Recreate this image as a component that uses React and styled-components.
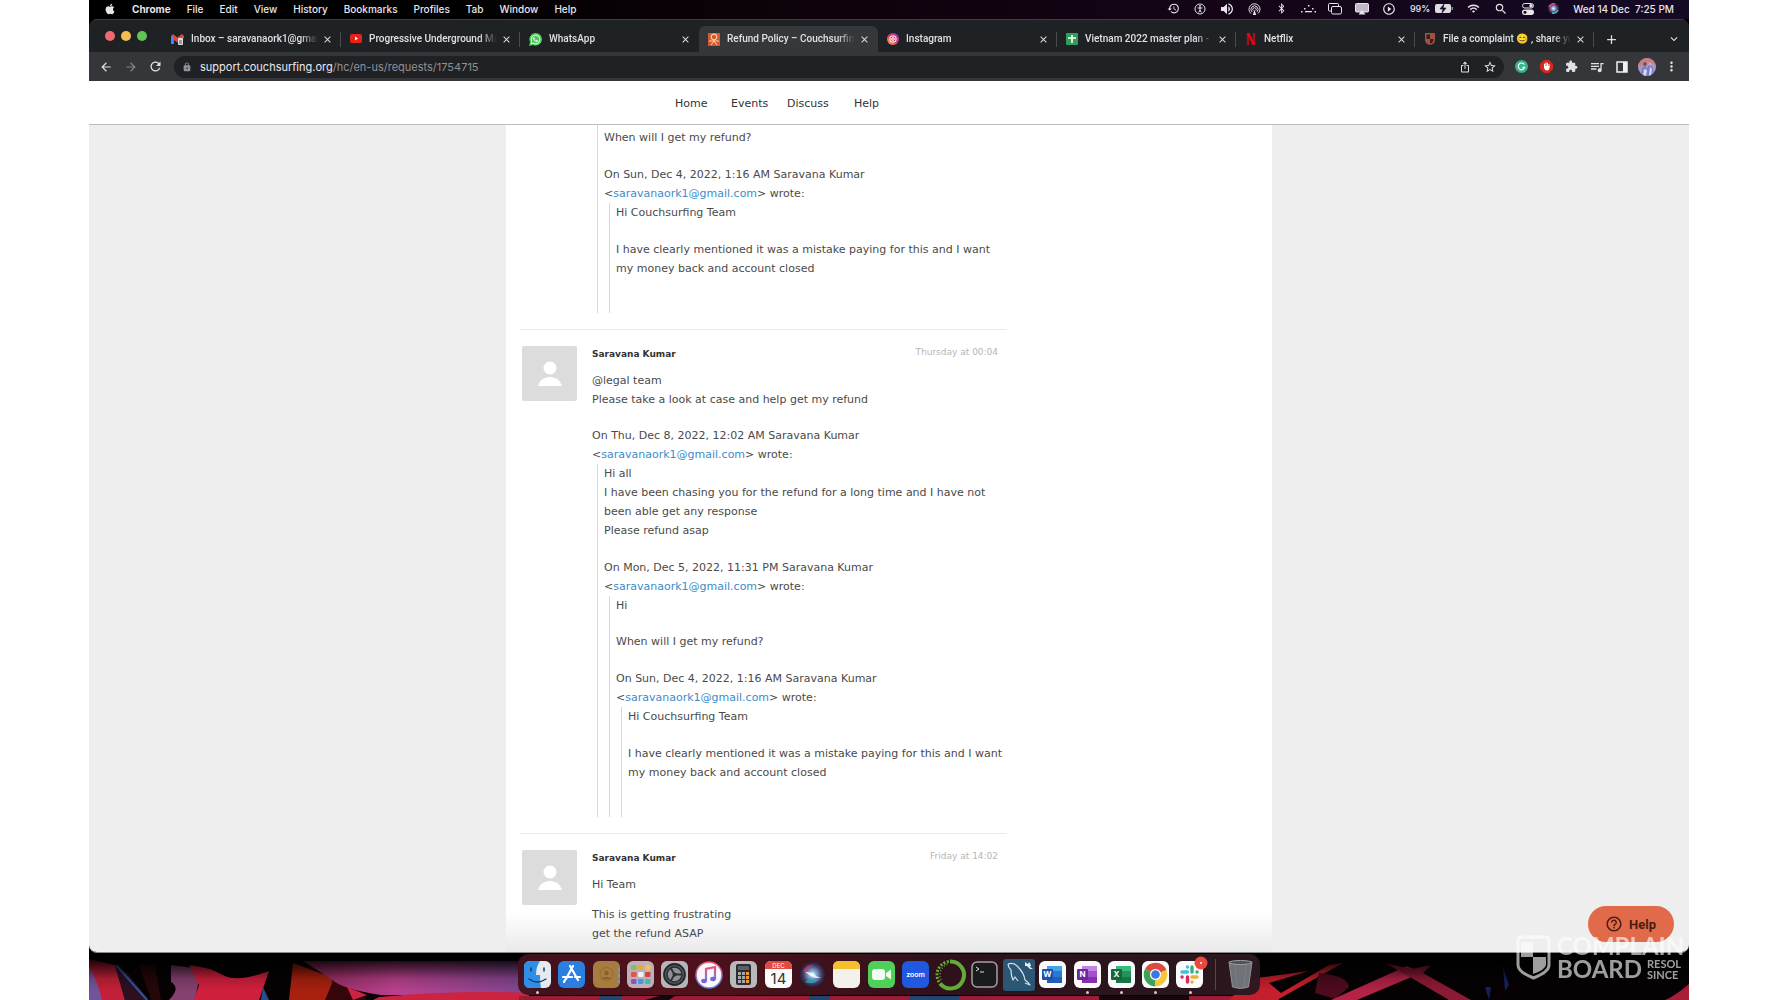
import styled, { createGlobalStyle } from "styled-components";
import { FaApple, FaWhatsapp, FaBluetoothB } from "react-icons/fa";
import {
  MdAdd,
  MdArrowBack,
  MdArrowForward,
  MdClose,
  MdExpandMore,
  MdExtension,
  MdHelpOutline,
  MdHistory,
  MdIosShare,
  MdLock,
  MdMoreVert,
  MdPlayCircleOutline,
  MdQueueMusic,
  MdRefresh,
  MdSearch,
  MdStarBorder,
  MdVolumeUp,
  MdWifi,
} from "react-icons/md";

const GlobalStyle = createGlobalStyle`
  * {
    box-sizing: border-box;
    margin: 0;
    padding: 0;
  }

  body {
    background: #fff;
    font-family: Inter, "Liberation Sans", sans-serif;
  }

  button {
    border: none;
    background: none;
    color: inherit;
    font: inherit;
    display: flex;
    align-items: center;
    justify-content: center;
  }

  a {
    color: inherit;
    text-decoration: none;
  }

  svg {
    display: block;
    flex-shrink: 0;
  }
`;

const Screen = styled.div`
  height: 100vh;
  margin: 0 89px;
  display: flex;
  flex-direction: column;
  background: #000;
  position: relative;
  overflow: hidden;
`;

/* ---------- menu bar ---------- */

const MenuBar = styled.header`
  height: 19px;
  flex-shrink: 0;
  display: flex;
  align-items: center;
  justify-content: space-between;
  padding: 0 15px 2px;
  background: linear-gradient(90deg, #000 20%, #0c0209 40%, #130516 70%, #150a26);
  color: #e8e6ea;
  font-size: 10px;
  font-weight: 500;
`;

const Menus = styled.nav`
  display: flex;
  align-items: center;
  gap: 16px;
`;

const MenuButton = styled.button`
  font-weight: ${(props) => (props.$bold ? 700 : 500)};
`;

const StatusItems = styled.div`
  display: flex;
  align-items: center;
  gap: 14px;
`;

const StatusIcon = styled.span`
  width: ${(props) => props.$width || 13}px;
  display: flex;
  justify-content: center;
`;

const BatteryStatus = styled.span`
  display: flex;
  align-items: center;
  gap: 5px;
  font-size: 9px;
`;

/* ---------- browser ---------- */

const Browser = styled.main`
  flex: 1;
  min-height: 0;
  display: flex;
  flex-direction: column;
  border-radius: 8px;
  overflow: hidden;
  border-bottom: 1px solid #8b8b8b;
`;

const TabStrip = styled.div`
  height: 33px;
  flex-shrink: 0;
  display: flex;
  align-items: flex-end;
  background: #1f2225;
  border-top: 1px solid #3d4042;
  color: #dfe1e4;
`;

const TrafficLights = styled.div`
  width: 73px;
  height: 32px;
  flex-shrink: 0;
  display: flex;
  align-items: center;
  gap: 6px;
  padding: 0 0 0 16px;
`;

const Light = styled.button`
  width: 10px;
  height: 10px;
  border-radius: 50%;
  background: ${(props) => props.$color};
`;

const Tab = styled.div`
  flex: 0 1 179px;
  min-width: 0;
  height: 26px;
  display: flex;
  align-items: center;
  padding: 0 0 0 9px;
  border-radius: 6px 6px 0 0;
  background: ${(props) => (props.$active ? "#35383a" : "transparent")};
`;

const TabTitle = styled.span`
  flex: 1;
  min-width: 0;
  margin: 0 4px 0 7px;
  overflow: hidden;
  white-space: nowrap;
  font-family: Roboto, sans-serif;
  font-size: 10px;
  line-height: 14px;
  font-weight: 500;
  mask-image: linear-gradient(90deg, #000 86%, transparent);
`;

const TabDivider = styled.span`
  width: 1px;
  height: 15px;
  margin-left: 7px;
  background: ${(props) => (props.$hidden ? "transparent" : "#4a4d50")};
`;

const StripButton = styled.button`
  width: 30px;
  height: 26px;
  margin-left: ${(props) => (props.$end ? "auto" : "2px")};
`;

const Toolbar = styled.div`
  height: 29px;
  flex-shrink: 0;
  display: flex;
  align-items: center;
  padding: 0 5px 0 4px;
  background: #35363a;
  color: #dfe1e4;
`;

const ToolButton = styled.button`
  width: 25px;
  height: 22px;
  flex-shrink: 0;
  opacity: ${(props) => (props.$dim ? 0.45 : 1)};
`;

const AddressBar = styled.div`
  flex: 1;
  height: 22px;
  margin: 0 5px 0 6px;
  padding: 0 2px 0 8px;
  display: flex;
  align-items: center;
  border-radius: 11px;
  background: #202124;
  font-size: 11px;
`;

const Url = styled.a`
  flex: 1;
  margin-left: 8px;
  color: #8f9296;
`;

const Domain = styled.span`
  color: #e8eaed;
`;

/* ---------- web page ---------- */

const SiteHeader = styled.header`
  height: 44px;
  flex-shrink: 0;
  display: flex;
  justify-content: center;
  background: #fff;
  border-bottom: 1px solid #bdbdbd;
`;

const SiteNav = styled.nav`
  width: 766px;
  padding-top: 1px;
  padding-left: 169px;
  display: grid;
  grid-template-columns: 56px 56px 67px auto;
  align-items: center;
  color: #333;
  font-family: "DejaVu Sans", Verdana, sans-serif;
  font-size: 11px;
`;

const PageBody = styled.div`
  flex: 1;
  min-height: 0;
  display: flex;
  justify-content: center;
  overflow: hidden;
  background: #eee;
`;

const Column = styled.section`
  width: 766px;
  padding: 0 14px;
  background: linear-gradient(#fff calc(100% - 40px), #e9e9e9);
  color: #4a4a4a;
  font-family: "DejaVu Sans", Verdana, sans-serif;
  font-size: 11px;
  line-height: 19px;
`;

const Comments = styled.div`
  width: 66%;
`;

const Comment = styled.article`
  display: flex;
  gap: 15px;
  padding: ${(props) => (props.$first ? "0" : "16px")} 0 16px 2px;
  border-bottom: 1px solid #ebebeb;
`;

const Avatar = styled.div`
  width: 55px;
  height: 55px;
  flex-shrink: 0;
  display: flex;
  align-items: center;
  justify-content: center;
  border-radius: 2px;
  background: ${(props) => (props.$empty ? "transparent" : "#dcdcdc")};
`;

const CommentBody = styled.div`
  flex: 1;
  min-width: 0;
`;

const CommentHead = styled.div`
  display: flex;
  justify-content: space-between;
  align-items: flex-start;
  padding-right: 9px;
  margin-bottom: 8px;
`;

const Author = styled.strong`
  color: #333;
  font-size: 9px;
  line-height: 17px;
`;

const Time = styled.time`
  color: #b5b5b5;
  font-size: 9px;
  line-height: 12px;
`;

const Para = styled.p`
  white-space: nowrap;
  margin-bottom: ${(props) => props.$gap || 0}px;
`;

const Quote = styled.blockquote`
  margin-left: 5px;
  padding-left: 6px;
  padding-top: ${(props) => (props.$cut ? 3 : 0)}px;
  border-left: 1px solid #d9d9d9;
`;

const QuoteEnd = styled.div`
  height: 35px;
`;

const MailLink = styled.a`
  color: #3b8ccb;
`;

const HelpButton = styled.button`
  position: absolute;
  right: 15px;
  bottom: 58px;
  height: 36px;
  padding: 0 18px 0 17px;
  gap: 6px;
  border-radius: 18px;
  background: #e06a4a;
  color: #4a1d12;
  font-family: Roboto, sans-serif;
  font-size: 13px;
  font-weight: 700;
`;

/* ---------- desktop + dock ---------- */

const Desktop = styled.footer`
  position: relative;
  height: 47px;
  flex-shrink: 0;
  display: flex;
  justify-content: center;
  align-items: flex-start;
  padding-top: 1px;
`;

const WallpaperSvg = styled.svg`
  position: absolute;
  inset: 0;
  width: 100%;
  height: 100%;
`;

const DockBar = styled.nav`
  position: relative;
  width: 742px;
  height: 41px;
  padding: 0 6px;
  display: flex;
  align-items: center;
  border-radius: 10px;
  background: linear-gradient(90deg, rgba(64, 18, 30, 0.96), rgba(84, 18, 28, 0.96) 20%, rgba(46, 18, 28, 0.97) 60%, rgba(44, 24, 32, 0.97));
`;

const DockApps = styled.div`
  flex: 1;
  display: flex;
  justify-content: space-between;
`;

const DockApp = styled.button`
  position: relative;
  width: 27px;
  height: 36px;

  &::after {
    content: "";
    position: absolute;
    bottom: -1px;
    width: 3px;
    height: 3px;
    border-radius: 50%;
    background: ${(props) => (props.$running ? "#d8c4cb" : "transparent")};
  }
`;

const DockDivider = styled.span`
  width: 1px;
  height: 31px;
  margin: 0 11px;
  background: #5c444e;
`;

const Watermark = styled.div`
  position: absolute;
  left: calc(100% - 173px);
  bottom: 20px;
  width: 190px;
  display: flex;
  align-items: flex-end;
  gap: 6px;
  color: #fff;
  opacity: 0.62;
  pointer-events: none;
  font-family: Lato, sans-serif;
`;

const MarkWords = styled.div`
  font-size: 24px;
  line-height: 23px;
  font-weight: 700;
  white-space: nowrap;
`;

const MarkRow = styled.div`
  display: flex;
  align-items: center;
  gap: 5px;
`;

const MarkSmall = styled.span`
  font-size: 11px;
  line-height: 11px;
`;

/* ---------- tab icons ---------- */

const GmailIcon = () => (
  <svg width="13" height="12" viewBox="0 0 13 12">
    <path d="M1 11V3l2 1v7z" fill="#4285f4" />
    <path d="M12 11V3l-2 1v7z" fill="#34a853" />
    <path d="M0 3l2-2 4.500 3.500L11 1l2 2v2L6.500 9.500 0 5z" fill="#ea4335" />
    <path d="M0 3l3 1v7H0z" fill="#4285f4" />
    <rect x="7" y="5" width="5" height="7" rx="1" fill="#ddd" />
    <path d="M8 8h3M8 10h3" stroke="#555" />
  </svg>
);

const YoutubeIcon = () => (
  <svg width="12" height="12" viewBox="0 0 12 12">
    <rect y="1" width="12" height="9" rx="2" fill="#e62117" />
    <path d="M5 3.500v4l3-2z" fill="#fff" />
  </svg>
);

const WhatsappIcon = () => (
  <svg width="13" height="13" viewBox="0 0 13 13">
    <path d="M0 13l1-4a6.300 6.300 0 1 1 3 3z" fill="#4ac959" />
    <FaWhatsapp x="1" y="1" size={11} color="#fff" />
  </svg>
);

const CouchIcon = () => (
  <svg width="12" height="13" viewBox="0 0 12 13">
    <rect width="12" height="13" fill="#d9572b" />
    <circle cx="6" cy="4" r="2.800" fill="none" stroke="#f8cfae" strokeWidth="1.200" />
    <path d="M6 6v2M1 8h10M3 12l3-4 3 4" fill="none" stroke="#f8cfae" />
  </svg>
);

const InstagramIcon = () => (
  <svg width="12" height="12" viewBox="0 0 12 12">
    <defs>
      <linearGradient id="insta" x1="0" y1="1" x2="1" y2="0">
        <stop offset="0" stopColor="#fdb53f" />
        <stop offset="0.500" stopColor="#e5376b" />
        <stop offset="1" stopColor="#8a3ac8" />
      </linearGradient>
    </defs>
    <circle cx="6" cy="6" r="6" fill="url(#insta)" />
    <rect x="3" y="3" width="6" height="6" rx="2" fill="none" stroke="#fff" />
    <circle cx="6" cy="6" r="1.300" fill="none" stroke="#fff" />
  </svg>
);

const SheetIcon = () => (
  <svg width="12" height="12" viewBox="0 0 12 12">
    <rect width="12" height="12" rx="1" fill="#2f9d58" />
    <path d="M2 5h8M6 2v8" stroke="#fff" strokeWidth="1.600" />
  </svg>
);

const NetflixIcon = () => (
  <svg width="12" height="12" viewBox="0 0 12 12">
    <path d="M3 0v12M9 0v12" stroke="#a80f16" strokeWidth="2.400" />
    <path d="M1.800 0h2.600l5.800 12H7.600z" fill="#e50914" />
  </svg>
);

const ShieldIcon = () => (
  <svg width="12" height="12" viewBox="0 0 12 12">
    <path d="M1 0h10v7q0 4-5 5-5-1-5-5z" fill="#a8503f" />
    <path d="M2.500 1.500H6V6H2.500zM6 6h3.500q0 4-3.500 4.500z" fill="#33201e" />
  </svg>
);

/* ---------- status icons ---------- */

const AccessIcon = () => (
  <svg width="12" height="12" viewBox="0 0 12 12" fill="none" stroke="currentColor">
    <circle cx="6" cy="6" r="5" />
    <path d="M3.500 5h5M6 4v3M6 7l-1.300 2.500M6 7l1.300 2.500" />
    <circle cx="6" cy="3" r="0.500" fill="currentColor" />
  </svg>
);

const AirdropIcon = () => (
  <svg width="13" height="12" viewBox="0 0 13 12" fill="none" stroke="currentColor">
    <path d="M3 10.500a5.500 5.500 0 1 1 7 0M4 8.800a3.500 3.500 0 1 1 5 0M5.200 7.500a1.700 1.700 0 1 1 2.600 0" />
    <path d="M6.500 6.500L4.800 12h3.400z" fill="currentColor" stroke="none" />
  </svg>
);

const DotsIcon = () => (
  <svg width="15" height="8" viewBox="0 0 15 8" fill="currentColor">
    <path d="M0 6h1.500v1.500H0zM3 3h1.500v1.500H3zM7 0h1.500v1.500H7zM11 3h1.500v1.500H11zM13.500 6H15v1.500h-1.500zM4 6h7v1.300H4z" />
  </svg>
);

const WindowsIcon = () => (
  <svg width="14" height="12" viewBox="0 0 14 12" fill="none" stroke="currentColor">
    <path d="M3 8H1.500q-1 0-1-1V1.500q0-1 1-1h8q1 0 1 1V3" />
    <rect x="3.500" y="3.500" width="10" height="7.500" rx="1.500" />
  </svg>
);

const DisplayIcon = () => (
  <svg width="14" height="12" viewBox="0 0 14 12">
    <rect x="0.500" y="0.500" width="13" height="8.500" rx="1" fill="#bdb8c4" stroke="currentColor" />
    <path d="M7 7l3.500 4.500h-7z" fill="currentColor" />
  </svg>
);

const BatteryIcon = () => (
  <svg width="18" height="9" viewBox="0 0 18 9">
    <rect width="16" height="9" rx="2" fill="#dedbe2" />
    <rect x="16.500" y="3" width="1.500" height="3" fill="#8d8894" />
    <path d="M9 0L5 5h3L7 9l4-5H8z" fill="#150a26" stroke="#150a26" strokeWidth="0.600" />
  </svg>
);

const ControlIcon = () => (
  <svg width="12" height="12" viewBox="0 0 12 12">
    <rect x="0.500" y="0.500" width="11" height="4.500" rx="2.200" fill="none" stroke="currentColor" />
    <circle cx="9" cy="2.700" r="1.700" fill="currentColor" />
    <rect y="6.500" width="12" height="5.500" rx="2.700" fill="currentColor" />
    <circle cx="3" cy="9.200" r="1.500" fill="#150a26" />
  </svg>
);

const SiriDefs = () => (
  <defs>
    <radialGradient id="siri">
      <stop offset="0" stopColor="#fff" />
      <stop offset="0.300" stopColor="#7fb7e8" />
      <stop offset="0.650" stopColor="#7b3b78" />
      <stop offset="1" stopColor="#1c2334" />
    </radialGradient>
  </defs>
);

const SiriSmall = () => (
  <svg width="11" height="11" viewBox="0 0 11 11">
    <SiriDefs />
    <circle cx="5.500" cy="5.500" r="5.500" fill="url(#siri)" />
    <path d="M1 4a5 5 0 0 1 6-3" stroke="#e05478" strokeWidth="1.500" fill="none" />
    <path d="M4 10a5 5 0 0 0 6-3" stroke="#3bc6b4" strokeWidth="1.500" fill="none" />
  </svg>
);

/* ---------- toolbar icons ---------- */

const GrammarlyIcon = () => (
  <svg width="13" height="13" viewBox="0 0 13 13">
    <circle cx="6.500" cy="6.500" r="6.500" fill="#35b58a" />
    <path d="M9.300 4.500A3.300 3.300 0 1 0 9.700 7.300H7.300" fill="none" stroke="#fff" strokeWidth="1.200" />
  </svg>
);

const BlockIcon = () => (
  <svg width="13" height="13" viewBox="0 0 13 13">
    <path d="M4 0h5l4 4v5l-4 4H4L0 9V4z" fill="#d6291e" />
    <path d="M4.500 7V4M6 6V2.800M7.500 6V3.300M9 7V4.500" stroke="#fff" strokeWidth="1.100" strokeLinecap="round" />
    <path d="M4 6h5.500v2q-.5 2.500-2.500 2.500T4 8z" fill="#fff" />
  </svg>
);

const PanelIcon = () => (
  <svg width="12" height="12" viewBox="0 0 12 12">
    <rect x="1" y="1" width="10" height="10" fill="none" stroke="#f1f1f1" strokeWidth="1.500" />
    <path d="M7 1h4v10H7z" fill="#f1f1f1" />
  </svg>
);

const ProfilePic = () => (
  <svg width="18" height="18" viewBox="0 0 18 18">
    <defs>
      <clipPath id="pic">
        <circle cx="9" cy="9" r="9" />
      </clipPath>
    </defs>
    <g clipPath="url(#pic)">
      <path d="M0 0h18v18H0z" fill="#a996c4" />
      <path d="M0 0h18v5l-5 2-4-3-5 4-4-1z" fill="#c97f80" />
      <path d="M3 18l1-8 3-3 2 4 2-5 4 4 1 8z" fill="#6d83cf" />
      <path d="M6 11l3 1-1 6H5zM12 9l2 2-1 7h-2z" fill="#e6d5ea" />
      <circle cx="7" cy="6" r="1.800" fill="#7e3f4a" />
      <circle cx="12" cy="6" r="1.800" fill="#d8a4a0" />
    </g>
  </svg>
);

const PersonIcon = () => (
  <svg width="26" height="28" viewBox="0 0 26 28" fill="#fff">
    <circle cx="13" cy="8" r="6.500" />
    <path d="M1 26q2-8.500 12-9 10 .5 12 9z" />
  </svg>
);

/* ---------- dock icons ---------- */

const Tile = ({ fill, children }) => (
  <svg width="27" height="27" viewBox="0 0 27 27">
    <rect width="27" height="27" rx="6" fill={fill} />
    {children}
  </svg>
);

const Finder = () => (
  <Tile fill="#e6eaf0">
    <path d="M6 0h10q-4 6-4 14h4q0 8 1 13H6q-6 0-6-6V6q0-6 6-6z" fill="#2f8fe6" />
    <path d="M7 7v3M20 7v3" stroke="#123a66" strokeWidth="1.500" strokeLinecap="round" />
    <path d="M5 18q8 6 17 0" stroke="#123a66" strokeWidth="1.300" fill="none" strokeLinecap="round" />
  </Tile>
);

const AppStore = () => (
  <Tile fill="#2b7fe0">
    <path d="M15 5L8 18M12 5l8 14M5 16h9M17 16h5M7 19l-1 2" stroke="#fff" strokeWidth="2.200" strokeLinecap="round" />
  </Tile>
);

const Contacts = () => (
  <Tile fill="#a87c3f">
    <path d="M26 7v4M26 13v4M26 19v3" stroke="#7c97a8" strokeWidth="2" />
    <circle cx="13.500" cy="13" r="6.500" fill="none" stroke="#936b34" />
    <circle cx="13.500" cy="12" r="2.200" fill="#86602d" />
    <path d="M8 18q5.500-4 11 0" fill="#86602d" />
  </Tile>
);

const padColors = ["#7ec05a", "#f0a53a", "#f0c44a", "#e2544c", "#eef0f4", "#d9403c", "#8a55c8", "#3c9fdf", "#4cb6ae"];

const Launchpad = () => (
  <Tile fill="#bdb0b8">
    {padColors.map((color, i) => (
      <rect key={color} x={4 + (i % 3) * 7} y={4 + Math.floor(i / 3) * 7} width="5.500" height="5" rx="1.200" fill={color} />
    ))}
  </Tile>
);

const Settings = () => (
  <Tile fill="#b4b6b9">
    <circle cx="13.500" cy="13.500" r="10.500" fill="#55585c" stroke="#26282b" strokeWidth="1.800" />
    <circle cx="13.500" cy="13.500" r="7.500" fill="#8e9297" stroke="#2b2d30" strokeWidth="1.500" />
    <path d="M13.500 13.500L10 7.500M13.500 13.500h7M13.500 13.500L10 19.500" stroke="#2b2d30" strokeWidth="1.800" />
    <circle cx="13.500" cy="13.500" r="2" fill="#2b2d30" />
  </Tile>
);

const Music = () => (
  <svg width="28" height="28" viewBox="0 0 28 28">
    <defs>
      <linearGradient id="music" x1="0" y1="0" x2="0" y2="1">
        <stop offset="0" stopColor="#f0506a" />
        <stop offset="1" stopColor="#4d8df0" />
      </linearGradient>
    </defs>
    <circle cx="14" cy="14" r="13" fill="#fbf6fb" stroke="url(#music)" strokeWidth="1.500" />
    <path d="M11 20V8l9-2v12" fill="none" stroke="url(#music)" strokeWidth="2.200" />
    <ellipse cx="9" cy="20" rx="2.800" ry="2.200" fill="#7b62d8" />
    <ellipse cx="18" cy="18" rx="2.800" ry="2.200" fill="#7b62d8" />
  </svg>
);

const Calculator = () => (
  <Tile fill="#b9b9bc">
    <rect x="6" y="3" width="15" height="21" rx="2" fill="#2b2d30" />
    <rect x="8" y="5" width="11" height="4" fill="#5c6064" />
    {[11, 15, 19].map((y) => (
      <g key={y}>
        <rect x="8" y={y} width="3" height="3" fill="#a5a7aa" />
        <rect x="12" y={y} width="3" height="3" fill="#a5a7aa" />
        <rect x="16" y={y} width="3" height="3" fill="#f29b2c" />
      </g>
    ))}
  </Tile>
);

const Calendar = () => (
  <Tile fill="#fafafa">
    <path d="M0 8V6q0-6 6-6h15q6 0 6 6v2z" fill="#df4a41" />
    <text x="13.500" y="7" textAnchor="middle" fontFamily="Inter" fontSize="6" fill="#fff">DEC</text>
    <text x="13.500" y="23" textAnchor="middle" fontFamily="Inter" fontSize="15" fill="#333">14</text>
  </Tile>
);

const Siri = () => (
  <svg width="27" height="27" viewBox="0 0 27 27">
    <defs>
      <radialGradient id="orb">
        <stop offset="0" stopColor="#f4fbff" />
        <stop offset="0.250" stopColor="#86b9e0" />
        <stop offset="0.700" stopColor="#4a3a66" />
        <stop offset="1" stopColor="#231a2c" />
      </radialGradient>
    </defs>
    <circle cx="13.500" cy="13.500" r="13" fill="url(#orb)" />
    <path d="M4 10q4-7 11-6-6 2-8 8z" fill="#c23f74" opacity="0.800" />
    <path d="M6 21q8 4 16-4-7 3-11 0z" fill="#2ba3b4" opacity="0.800" />
    <path d="M6 11q7 0 10 3t7 2q-5 2-9 0t-8-5z" fill="#fff" opacity="0.800" />
  </svg>
);

const Notes = () => (
  <Tile fill="#f4f1ea">
    <path d="M0 8V6q0-6 6-6h15q6 0 6 6v2z" fill="#f6bf2f" />
  </Tile>
);

const Facetime = () => (
  <Tile fill="#4fd058">
    <rect x="4" y="8" width="13" height="11" rx="3" fill="#f2fbf2" />
    <path d="M18 12l5-3.500v10L18 15z" fill="#f2fbf2" />
  </Tile>
);

const Zoom = () => (
  <Tile fill="#2059e0">
    <text x="13.500" y="16" textAnchor="middle" fontFamily="Inter" fontWeight="600" fontSize="7" fill="#fff">zoom</text>
  </Tile>
);

const Anaconda = () => (
  <svg width="32" height="32" viewBox="0 0 32 32" fill="none" stroke="#63ab38">
    <path d="M16 2.500a13.500 13.500 0 1 1-10 22" strokeWidth="4" />
    <path d="M5 23A13.500 13.500 0 0 1 16 2.500" strokeWidth="3" strokeDasharray="2 1.500" />
    <path d="M7 21A11.500 11.500 0 0 1 14 5" strokeWidth="1.500" strokeDasharray="1 2" />
  </svg>
);

const Terminal = () => (
  <svg width="27" height="27" viewBox="0 0 27 27">
    <rect x="1" y="1" width="25" height="25" rx="5" fill="#1b1b1d" stroke="#a4a0a2" strokeWidth="1.500" />
    <path d="M5 6l3 2-3 2M9 11h4" fill="none" stroke="#ddd" />
  </svg>
);

const Mysql = () => (
  <svg width="32" height="32" viewBox="0 0 32 32">
    <rect width="32" height="32" rx="3" fill="#2b5674" />
    <path
      d="M5 5q6-2 10 3 6 6 7 13 3 2 5 5l-5-2M5 5q0 3 3 6 0 6 2 10l2-3 3 4"
      fill="none"
      stroke="#d5e3ec"
      strokeWidth="1.200"
      strokeLinejoin="round"
    />
    <path d="M22 3l3 2 1-2 2 3-1 2 3 2-3 0-3-3-2 0z" fill="#e6eef3" />
  </svg>
);

const Office = ({ letter, dark, mid, light }) => (
  <Tile fill="#fbfbfb">
    <rect x="8" y="5" width="15" height="17" rx="1" fill={mid} />
    <path d="M8 5h15v5H8z" fill={light} />
    <path d="M8 16h15v6H8z" fill={dark} opacity="0.700" />
    <rect x="3" y="8" width="11" height="11" rx="1" fill={dark} />
    <text x="8.500" y="16" textAnchor="middle" fontFamily="Inter" fontWeight="700" fontSize="8" fill="#fff">{letter}</text>
  </Tile>
);

const Chrome = () => (
  <Tile fill="#fbfbfb">
    <path d="M13.500 13.500L3 8a12 12 0 0 1 21.500 1z" fill="#dd4b3e" />
    <path d="M13.500 13.500L24.500 9A12 12 0 0 1 13 25.400z" fill="#f5c63b" />
    <path d="M13.500 13.500L13 25.400A12 12 0 0 1 3 8z" fill="#3fa355" />
    <circle cx="13.500" cy="13.500" r="5.500" fill="#fff" />
    <circle cx="13.500" cy="13.500" r="4.300" fill="#3b78e0" />
  </Tile>
);

const Slack = () => (
  <svg width="30" height="33" viewBox="0 0 30 33" overflow="visible">
    <rect x="1" y="3" width="27" height="27" rx="6" fill="#fbfbfb" />
    <g strokeWidth="3.400" strokeLinecap="round">
      <path d="M12.500 9v.1M7 14h5.500" stroke="#42bfe8" />
      <path d="M17 9v5M22 14h.1" stroke="#3bae7e" />
      <path d="M17 19h5M17 24v.1" stroke="#e8b139" />
      <path d="M12.500 19v5M7 19h.1" stroke="#d8285c" />
    </g>
    <circle cx="26" cy="5" r="6.500" fill="#ea4a3d" />
    <circle cx="26" cy="5" r="1" fill="#fff" />
  </svg>
);

const Trash = () => (
  <svg width="25" height="29" viewBox="0 0 25 29">
    <path d="M1 2h23l-3.500 25q-8 3-16 0z" fill="#6f7377" stroke="#8d9195" />
    <ellipse cx="12.500" cy="2.500" rx="11.500" ry="2" fill="#4d5054" stroke="#9da1a4" />
    <path d="M7 6l2 20M18 6l-2 20" stroke="#7b7f83" />
  </svg>
);

const Wallpaper = () => (
  <WallpaperSvg viewBox="0 0 1600 47" preserveAspectRatio="none">
    <defs>
      <linearGradient id="fade" x1="0" y1="0" x2="0" y2="1">
        <stop offset="0" stopColor="#000" />
        <stop offset="0.150" stopColor="#000" stopOpacity="0.850" />
        <stop offset="0.550" stopColor="#000" stopOpacity="0.150" />
        <stop offset="0.800" stopColor="#000" stopOpacity="0" />
      </linearGradient>
      <linearGradient id="violet" x1="0" y1="0" x2="1" y2="0">
        <stop offset="0" stopColor="#8e2a58" />
        <stop offset="0.400" stopColor="#b8418c" />
        <stop offset="1" stopColor="#7c4690" />
      </linearGradient>
    </defs>
    <rect width="1600" height="47" fill="#060204" />
    <path d="M0 6L26 12 36 47H0z" fill="#c22038" />
    <path d="M0 14q8 12 13 33H0z" fill="#71549b" />
    <path d="M26 12l12 8 22 27H36z" fill="#2c1022" />
    <path d="M27 12l31 35" stroke="#2c55a0" strokeWidth="2" />
    <path d="M50 12l16 0 6 35h-10z" fill="#240709" />
    <path d="M82 12l30 4-6 31H80q12-12 2-18z" fill="#84406e" />
    <path d="M100 12q20 2 34 10t46-4l-10 29h-65l5-15z" fill="#cf1f3c" />
    <path d="M174 34l6 13h-8z" fill="#284d92" />
    <path d="M204 10l38 14 8 23h-50z" fill="#a8200f" />
    <path d="M244 28l28 12 6 7h-42z" fill="#34060b" />
    <path d="M214 8h232v34H292q-40-6-50-16z" fill="url(#violet)" />
    <path d="M258 34l20 8-14 5zM290 44q80-7 150-4v7H284z" fill="#cc2440" />
    <path d="M430 43h760v4H430z" fill="#9c1c38" />
    <path d="M510 43h22v4h-22zM720 43h20v4h-20zM820 43h50v4h-50z" fill="#20456f" />
    <path d="M570 43h16l-6 4h-24zM1010 43h90v4h-90z" fill="#17060c" />
    <path d="M1160 26l60-8-40 12 12 10 48-28 14-2-66 37h-48z" fill="#c4202c" />
    <path d="M1230 20q28 2 30 14l-14 12-20-6z" fill="#4d0c1d" />
    <path d="M1242 47l76-34 14 7-64 27z" fill="#b22346" />
    <path d="M1296 10l26 6 20-4-8 8 48 27h-22l-34-20z" fill="#8c1a34" />
    <path d="M1414 14l6 18-4 6zM1396 34l6 0-2 13z" fill="#16215c" />
    <path d="M1576 47q10-4 24-16v16z" fill="#a81d38" />
    <rect width="1600" height="47" fill="url(#fade)" />
  </WallpaperSvg>
);

const ShieldMark = () => (
  <svg width="35" height="45" viewBox="0 0 35 45">
    <path d="M5 2h25q3 0 3 4v24q0 7-15.500 13Q2 37 2 30V6q0-4 3-4z" fill="none" stroke="#fff" strokeWidth="3" />
    <path d="M5 7h12v15H5zM17 22h13v8q-1 5-13 9z" fill="#fff" />
  </svg>
);

/* ---------- data ---------- */

const menus = ["File", "Edit", "View", "History", "Bookmarks", "Profiles", "Tab", "Window", "Help"];

const tabs = [
  { title: "Inbox – saravanaork1@gmail.", icon: <GmailIcon /> },
  { title: "Progressive Underground Ma", icon: <YoutubeIcon /> },
  { title: "WhatsApp", icon: <WhatsappIcon />, noDivider: true },
  { title: "Refund Policy – Couchsurfing", icon: <CouchIcon />, active: true, noDivider: true },
  { title: "Instagram", icon: <InstagramIcon /> },
  { title: "Vietnam 2022 master plan -", icon: <SheetIcon /> },
  { title: "Netflix", icon: <NetflixIcon /> },
  { title: "File a complaint 😊 , share you", icon: <ShieldIcon /> },
];

const statusIcons = [
  { name: "history", icon: <MdHistory size={13} /> },
  { name: "access", icon: <AccessIcon /> },
  { name: "volume", icon: <MdVolumeUp size={16} /> },
  { name: "airdrop", icon: <AirdropIcon /> },
  { name: "bluetooth", icon: <FaBluetoothB size={11} /> },
  { name: "dots", icon: <DotsIcon /> },
  { name: "windows", icon: <WindowsIcon /> },
  { name: "display", icon: <DisplayIcon /> },
  { name: "play", icon: <MdPlayCircleOutline size={14} /> },
];

const apps = [
  { name: "Finder", icon: <Finder />, running: true },
  { name: "App Store", icon: <AppStore /> },
  { name: "Contacts", icon: <Contacts /> },
  { name: "Launchpad", icon: <Launchpad /> },
  { name: "Settings", icon: <Settings /> },
  { name: "Music", icon: <Music /> },
  { name: "Calculator", icon: <Calculator /> },
  { name: "Calendar", icon: <Calendar /> },
  { name: "Siri", icon: <Siri /> },
  { name: "Notes", icon: <Notes /> },
  { name: "FaceTime", icon: <Facetime /> },
  { name: "Zoom", icon: <Zoom /> },
  { name: "Anaconda", icon: <Anaconda /> },
  { name: "Terminal", icon: <Terminal /> },
  { name: "MySQL", icon: <Mysql /> },
  { name: "Word", icon: <Office letter="W" dark="#1c52ac" mid="#2b78cf" light="#43a2e8" /> },
  { name: "OneNote", icon: <Office letter="N" dark="#7324a0" mid="#a44fd0" light="#c583e6" />, running: true },
  { name: "Excel", icon: <Office letter="X" dark="#14683c" mid="#23935a" light="#38bb7c" />, running: true },
  { name: "Chrome", icon: <Chrome />, running: true },
  { name: "Slack", icon: <Slack />, running: true },
];

function Wrote({ date }) {
  return (
    <Para>
      On {date} Saravana Kumar
      <br />
      &lt;<MailLink href="mailto:saravanaork1@gmail.com">saravanaork1@gmail.com</MailLink>&gt; wrote:
    </Para>
  );
}

function FirstMail() {
  return (
    <>
      <Para $gap={18}>When will I get my refund?</Para>
      <Wrote date="Sun, Dec 4, 2022, 1:16 AM" />
      <Quote>
        <Para $gap={18}>Hi Couchsurfing Team</Para>
        <Para>
          I have clearly mentioned it was a mistake paying for this and I want
          <br />
          my money back and account closed
        </Para>
        <QuoteEnd />
      </Quote>
    </>
  );
}

function CommentItem({ time, children }) {
  return (
    <Comment>
      <Avatar>
        <PersonIcon />
      </Avatar>
      <CommentBody>
        <CommentHead>
          <Author>Saravana Kumar</Author>
          <Time>{time}</Time>
        </CommentHead>
        {children}
      </CommentBody>
    </Comment>
  );
}

function App() {
  return (
    <>
      <GlobalStyle />
      <Screen>
        <MenuBar>
          <Menus>
            <FaApple size={12} />
            <MenuButton $bold>Chrome</MenuButton>
            {menus.map((menu) => (
              <MenuButton key={menu}>{menu}</MenuButton>
            ))}
          </Menus>
          <StatusItems>
            {statusIcons.map(({ name, icon }) => (
              <StatusIcon key={name}>{icon}</StatusIcon>
            ))}
            <BatteryStatus>
              99% <BatteryIcon />
            </BatteryStatus>
            <StatusIcon>
              <MdWifi size={13} />
            </StatusIcon>
            <StatusIcon>
              <MdSearch size={14} />
            </StatusIcon>
            <StatusIcon>
              <ControlIcon />
            </StatusIcon>
            <StatusIcon $width={11}>
              <SiriSmall />
            </StatusIcon>
            <span>Wed 14 Dec&nbsp; 7:25 PM</span>
          </StatusItems>
        </MenuBar>

        <Browser>
          <TabStrip>
            <TrafficLights>
              <Light $color="#ee6a6e" aria-label="Close window" />
              <Light $color="#f5bd4f" aria-label="Minimise window" />
              <Light $color="#61c454" aria-label="Zoom window" />
            </TrafficLights>
            {tabs.map(({ title, icon, active, noDivider }) => (
              <Tab key={title} $active={active}>
                {icon}
                <TabTitle>{title}</TabTitle>
                <button aria-label={`Close ${title}`}>
                  <MdClose size={11} />
                </button>
                <TabDivider $hidden={noDivider} />
              </Tab>
            ))}
            <StripButton aria-label="New tab">
              <MdAdd size={15} />
            </StripButton>
            <StripButton $end aria-label="Search tabs">
              <MdExpandMore size={14} />
            </StripButton>
          </TabStrip>

          <Toolbar>
            <ToolButton aria-label="Back">
              <MdArrowBack size={14} />
            </ToolButton>
            <ToolButton $dim aria-label="Forward">
              <MdArrowForward size={14} />
            </ToolButton>
            <ToolButton aria-label="Reload">
              <MdRefresh size={15} />
            </ToolButton>
            <AddressBar>
              <MdLock size={10} color="#8f9296" />
              <Url href="#">
                <Domain>support.couchsurfing.org</Domain>/hc/en-us/requests/1754715
              </Url>
              <ToolButton aria-label="Share">
                <MdIosShare size={12} />
              </ToolButton>
              <ToolButton aria-label="Bookmark">
                <MdStarBorder size={14} />
              </ToolButton>
            </AddressBar>
            <ToolButton aria-label="Grammarly">
              <GrammarlyIcon />
            </ToolButton>
            <ToolButton aria-label="Ad blocker">
              <BlockIcon />
            </ToolButton>
            <ToolButton aria-label="Extensions">
              <MdExtension size={13} />
            </ToolButton>
            <ToolButton aria-label="Media">
              <MdQueueMusic size={16} />
            </ToolButton>
            <ToolButton aria-label="Side panel">
              <PanelIcon />
            </ToolButton>
            <ToolButton aria-label="Profile">
              <ProfilePic />
            </ToolButton>
            <ToolButton aria-label="More">
              <MdMoreVert size={15} />
            </ToolButton>
          </Toolbar>

          <SiteHeader>
            <SiteNav>
              <a href="#home">Home</a>
              <a href="#events">Events</a>
              <a href="#discuss">Discuss</a>
              <a href="#help">Help</a>
            </SiteNav>
          </SiteHeader>

          <PageBody>
            <Column>
              <Comments>
                <Comment $first>
                  <Avatar $empty />
                  <CommentBody>
                    <Quote $cut>
                      <FirstMail />
                    </Quote>
                  </CommentBody>
                </Comment>

                <CommentItem time="Thursday at 00:04">
                  <Para $gap={17}>
                    @legal team
                    <br />
                    Please take a look at case and help get my refund
                  </Para>
                  <Wrote date="Thu, Dec 8, 2022, 12:02 AM" />
                  <Quote>
                    <Para $gap={18}>
                      Hi all
                      <br />
                      I have been chasing you for the refund for a long time and I have not
                      <br />
                      been able get any response
                      <br />
                      Please refund asap
                    </Para>
                    <Wrote date="Mon, Dec 5, 2022, 11:31 PM" />
                    <Quote>
                      <Para $gap={17}>Hi</Para>
                      <FirstMail />
                    </Quote>
                  </Quote>
                </CommentItem>

                <CommentItem time="Friday at 14:02">
                  <Para $gap={11}>Hi Team</Para>
                  <Para>
                    This is getting frustrating
                    <br />
                    get the refund ASAP
                  </Para>
                </CommentItem>
              </Comments>
            </Column>
          </PageBody>
        </Browser>

        <Desktop>
          <Wallpaper />
          <DockBar>
            <DockApps>
              {apps.map(({ name, icon, running }) => (
                <DockApp key={name} $running={running} aria-label={name}>
                  {icon}
                </DockApp>
              ))}
            </DockApps>
            <DockDivider />
            <DockApp aria-label="Trash">
              <Trash />
            </DockApp>
          </DockBar>
        </Desktop>

        <HelpButton>
          <MdHelpOutline size={18} />
          Help
        </HelpButton>

        <Watermark>
          <ShieldMark />
          <MarkWords>
            COMPLAIN
            <MarkRow>
              BOARD
              <MarkSmall>
                RESOL
                <br />
                SINCE
              </MarkSmall>
            </MarkRow>
          </MarkWords>
        </Watermark>
      </Screen>
    </>
  );
}

export default App;
